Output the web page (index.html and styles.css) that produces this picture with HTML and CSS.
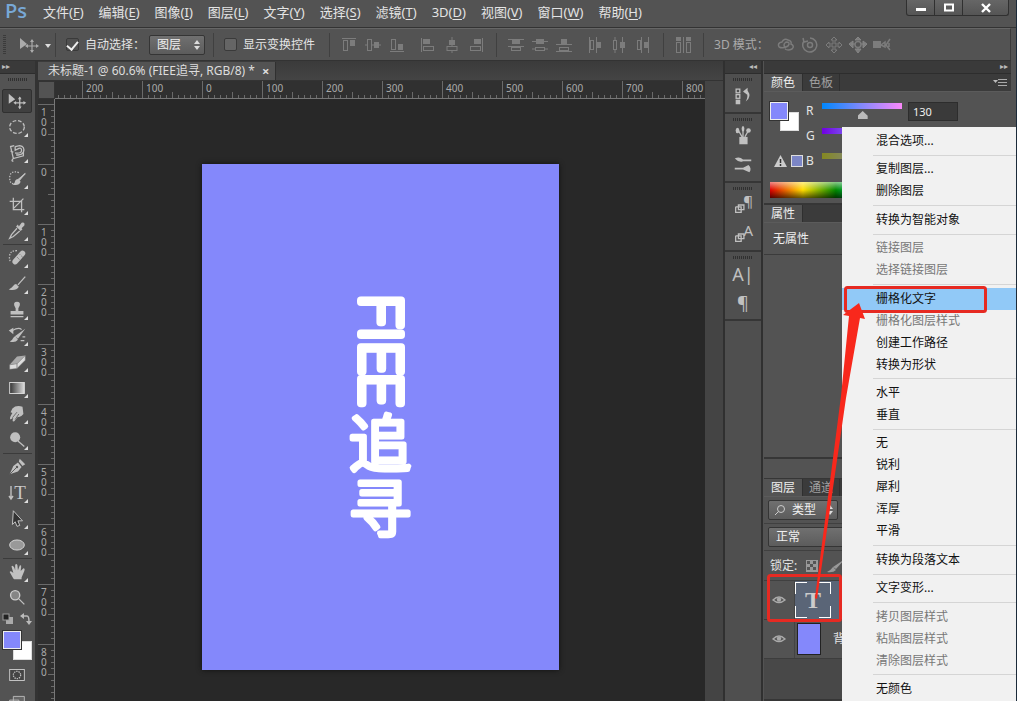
FILE: index.html
```html
<!DOCTYPE html>
<html lang="zh-CN">
<head>
<meta charset="utf-8">
<title>未标题-1</title>
<link rel="stylesheet" href="styles.css">
</head>
<body>
<svg class="defs" aria-hidden="true">
  <symbol id="eye" viewBox="0 0 14 10"><path d="M1 5Q7-1 13 5Q7 10 1 5Z" fill="none" stroke="currentColor" stroke-width="1.4"/><circle cx="7" cy="4.6" r="2.2" fill="currentColor"/></symbol>
  <symbol id="updown" viewBox="0 0 8 10"><path d="M4 0L7 4H1ZM4 10L7 6H1Z" fill="currentColor"/></symbol>
</svg>
<div class="app">
  <header class="titlebar">
    <span class="logo">Ps</span>
    <nav class="menubar">
      <button>文件(<u>F</u>)</button><button>编辑(<u>E</u>)</button><button>图像(<u>I</u>)</button><button>图层(<u>L</u>)</button><button>文字(<u>Y</u>)</button><button>选择(<u>S</u>)</button><button>滤镜(<u>T</u>)</button><button>3D(<u>D</u>)</button><button>视图(<u>V</u>)</button><button>窗口(<u>W</u>)</button><button>帮助(<u>H</u>)</button>
    </nav>
    <div class="winbtns">
      <button aria-label="最小化"><svg width="12" height="12"><path d="M1 7.500h10" stroke="#fff" stroke-width="3"/></svg></button>
      <button aria-label="最大化"><svg width="12" height="12"><rect x="2" y="2.500" width="8" height="6" fill="none" stroke="#fff" stroke-width="2"/></svg></button>
      <button class="close" aria-label="关闭"><svg width="12" height="12"><path d="M2 2L10 10M10 2L2 10" stroke="#fff" stroke-width="2.400"/></svg></button>
    </div>
  </header>

  <div class="options">
    <span class="vgrip"></span>
    <button class="preset" aria-label="移动工具"><svg width="36" height="18"><path d="M1 2V13L8 8Z" fill="#aaa"/><path d="M13 4V16M8 10H18" stroke="#aaa" stroke-width="1.200"/><path d="M13 3L11 6H15ZM13 17L11 14H15ZM6 10L9 8V12ZM20 10L17 8V12Z" fill="#aaa"/><path d="M26 8h6l-3 4Z" fill="#ddd"/></svg></button>
    <i class="bar"></i>
    <label class="opt"><input class="tick" type="checkbox" checked>自动选择：</label>
    <span class="pick target"><select aria-label="自动选择对象"><option>图层</option></select><svg class="pickmark" width="8" height="10"><use href="#updown"/></svg></span>
    <i class="bar gap"></i>
    <label class="opt"><input class="tick" type="checkbox">显示变换控件</label>
    <i class="bar widegap"></i>
    <div class="aligns">
      <button aria-label="顶对齐"><svg viewBox="0 0 16 16"><path d="M1 1.500H15" class="l"/><rect x="2.500" y="3.500" width="4" height="10" class="l"/><rect x="9" y="3" width="5" height="6"/></svg></button>
      <button aria-label="垂直居中对齐"><svg viewBox="0 0 16 16"><path d="M0 8H2M7 8H16" class="l"/><rect x="2.500" y="2.500" width="4" height="11" class="l"/><rect x="9" y="5" width="5" height="6"/></svg></button>
      <button aria-label="底对齐"><svg viewBox="0 0 16 16"><path d="M1 14.500H15" class="l"/><rect x="2.500" y="2.500" width="4" height="10" class="l"/><rect x="9" y="7" width="5" height="6"/></svg></button>
    </div>
    <div class="aligns">
      <button aria-label="左对齐"><svg viewBox="0 0 16 16"><path d="M1.500 1V15" class="l"/><rect x="3" y="2" width="7" height="5"/><rect x="3.500" y="9.500" width="10" height="4" class="l"/></svg></button>
      <button aria-label="水平居中对齐"><svg viewBox="0 0 16 16"><path d="M8 0V9M8 14V16" class="l"/><rect x="5" y="3" width="6" height="5"/><rect x="3" y="9.500" width="10" height="4" class="l"/></svg></button>
      <button aria-label="右对齐"><svg viewBox="0 0 16 16"><path d="M14.500 1V15" class="l"/><rect x="6" y="2" width="7" height="5"/><rect x="2.500" y="9.500" width="10" height="4" class="l"/></svg></button>
    </div>
    <i class="bar"></i>
    <div class="aligns">
      <button aria-label="按顶分布"><svg viewBox="0 0 16 16"><path d="M0 2.500H16M0 9.500H16" class="l"/><rect x="4" y="3" width="8" height="4"/><rect x="3.500" y="10.500" width="9" height="3" class="l"/></svg></button>
      <button aria-label="垂直居中分布"><svg viewBox="0 0 16 16"><path d="M0 4.500H16M0 12H3M13 12H16" class="l"/><rect x="4" y="2" width="8" height="5"/><rect x="3.500" y="10.500" width="9" height="3" class="l"/></svg></button>
      <button aria-label="按底分布"><svg viewBox="0 0 16 16"><path d="M0 7.500H16M0 14.500H16" class="l"/><rect x="5" y="2" width="6" height="5"/><rect x="3.500" y="10.500" width="9" height="3" class="l"/></svg></button>
    </div>
    <div class="aligns">
      <button aria-label="按左分布"><svg viewBox="0 0 16 16"><path d="M2.500 0V16M9.500 0V16" class="l"/><rect x="3.500" y="3.500" width="3" height="9" class="l"/><rect x="10" y="5" width="4" height="6"/></svg></button>
      <button aria-label="水平居中分布"><svg viewBox="0 0 16 16"><path d="M4 0V3M4 13V16M11.500 0V16" class="l"/><rect x="2.500" y="3.500" width="3" height="9" class="l"/><rect x="9" y="5" width="5" height="6"/></svg></button>
      <button aria-label="按右分布"><svg viewBox="0 0 16 16"><path d="M6.500 0V16M13.500 0V16" class="l"/><rect x="2.500" y="3.500" width="3" height="9" class="l"/><rect x="9" y="5" width="4" height="6"/></svg></button>
    </div>
    <i class="bar"></i>
    <div class="aligns"><button aria-label="自动对齐图层"><svg viewBox="0 0 16 16"><path d="M8.500 0V16" class="l"/><rect x="1" y="0" width="5" height="4"/><rect x="1.500" y="5.500" width="4" height="10" class="l"/><rect x="11" y="0" width="5" height="4"/><rect x="11.500" y="5.500" width="4" height="10" class="l"/></svg></button></div>
    <i class="bar"></i>
    <span class="mode">3D 模式：</span>
    <div class="aligns modes">
      <button aria-label="旋转"><svg viewBox="0 0 18 16"><path d="M2 10Q0 6 5 5Q7 1 11 3Q15 4 14 7Q18 9 15 12Q11 14 8 12M2 10Q6 12 11 9Q14 5 9 5Q5 8 9 11" class="l w"/></svg></button>
      <button aria-label="滚动"><svg viewBox="0 0 18 16"><circle cx="9" cy="8" r="2.500" class="l w"/><path d="M3 4A7 7 0 1 0 9 1M2 1L3 5L7 4" class="l w"/></svg></button>
      <button aria-label="拖动"><svg viewBox="0 0 18 16"><path d="M9 0L12 3H10V7H14V5L17 8L14 11V9H10V13H12L9 16L6 13H8V9H4V11L1 8L4 5V7H8V3H6Z" class="l"/></svg></button>
      <button aria-label="滑动"><svg viewBox="0 0 18 16"><path d="M9 0L12 3H6ZM0 7L4 4V11ZM18 7L14 4V11ZM9 16L6 12H12ZM2 7H6M12 7H16M9 10V13" stroke="#858585"/><circle cx="9" cy="7.500" r="3" class="l w"/></svg></button>
      <button aria-label="缩放"><svg viewBox="0 0 18 16"><rect x="0" y="4" width="8" height="7"/><path d="M8 8L12 5V10ZM17 2L13 8L17 13M16 6V10" class="l w"/></svg></button>
    </div>
  </div>

  <div class="work">
    <aside class="tools">
      <div class="strip">▸▸</div>
      <div class="grip"></div>
      <div class="toollist">
        <button class="tool on" aria-label="移动"><svg viewBox="0 0 24 24"><path d="M3 4V15L10 10Z"/><path d="M15 8V20M10 14H20" class="s"/><path d="M15 7L13 10H17ZM15 21L13 18H17ZM8 14L11 12V16ZM22 14L19 12V16Z"/></svg></button>
        <button class="tool more" aria-label="椭圆选框"><svg viewBox="0 0 24 24"><ellipse cx="12" cy="12" rx="8" ry="7" class="s" stroke-dasharray="4 2"/></svg></button>
        <button class="tool more" aria-label="磁性套索"><svg viewBox="0 0 24 24"><path d="M9 4L5 5L8 18L19 15V10M8 18Q5 21 8 21M5 10L8 11M10 5V9L14 7Q17 6 17 9Q17 13 10 12M10 5L15 4Q21 5 19 11Q17 15 11 14" class="s" stroke-width="1.900"/></svg></button>
        <button class="tool more" aria-label="快速选择"><svg viewBox="0 0 24 24"><path d="M14 5Q5 2 4 10Q4 18 9 17" class="s" stroke-dasharray="1.500 1.500"/><path d="M22 5L15 14L13 12ZM13 12L16 15Q14 20 7 18Q10 17 10 14Q11 12 13 12Z"/><path d="M21 6L14 13" class="s"/></svg></button>
        <button class="tool more" aria-label="裁剪"><svg viewBox="0 0 24 24"><path d="M8 4V17H20M4 8H17V20M8 16L19 5" class="s" stroke-width="2.200"/></svg></button>
        <button class="tool more" aria-label="吸管"><svg viewBox="0 0 24 24"><path d="M14 7L17 3Q21 2 20 6L17 9L18 10L16 12L11 7L13 5Z"/><path d="M12 9L6 16L4 20L8 18L15 12" class="s"/></svg></button>
        <hr>
        <button class="tool more" aria-label="修复画笔"><svg viewBox="0 0 24 24"><path d="M12 4Q4 4 4 10Q3 15 6 16" class="s" stroke-dasharray="1.500 1.500"/><path d="M18 7L10 16" stroke="#c0c0c0" stroke-width="6" stroke-linecap="round"/><path d="M12 11L16 15M15 8L19 12" stroke="#666" stroke-dasharray="1 1"/></svg></button>
        <button class="tool more" aria-label="画笔"><svg viewBox="0 0 24 24"><path d="M21 4L13 13" class="s" stroke-width="2"/><path d="M11 12L14 15Q11 20 3 18Q7 16 8 14Q9 12 11 12Z"/></svg></button>
        <button class="tool more" aria-label="仿制图章"><svg viewBox="0 0 24 24"><path d="M9 7Q8 3 12 3Q16 3 15 7L13.500 10V13H19V17H5V13H10.500V10ZM5 18.500H19V20H5Z"/></svg></button>
        <button class="tool more" aria-label="历史记录画笔"><svg viewBox="0 0 24 24"><path d="M21 4L13 15L10 12ZM10 12L13 16Q10 20 4 18Q7 17 8 14ZM3 6L8 3V10Z"/><path d="M7 6Q14 2 17 5M16 17H20M18 13H21" class="s"/></svg></button>
        <button class="tool more" aria-label="橡皮擦"><svg viewBox="0 0 24 24"><path d="M12 6L21 5L12 14L4 15Z" fill="#aaa"/><path d="M4 15L12 14V19L4 20ZM12 14L21 5V10L12 19Z" fill="#ddd" stroke="#777" stroke-width=".5"/></svg></button>
        <button class="tool more" aria-label="渐变"><svg viewBox="0 0 24 24"><defs><linearGradient id="grad"><stop stop-color="#333"/><stop offset="1" stop-color="#ddd"/></linearGradient></defs><rect x="4" y="6" width="16" height="12" fill="url(#grad)" stroke="#ddd"/></svg></button>
        <button class="tool more" aria-label="涂抹"><svg viewBox="0 0 24 24"><path d="M7 6Q11 2 18 4L19 12Q16 16 13 15L9 20Q6 21 8 16L5 18Q3 17 7 11L5 10Z"/><path d="M7 16L12 10M10 18L14 12" stroke="#666"/></svg></button>
        <button class="tool more" aria-label="减淡"><svg viewBox="0 0 24 24"><circle cx="10" cy="9" r="5.500"/><path d="M13 13L20 19" class="s" stroke-width="2.500"/></svg></button>
        <hr>
        <button class="tool more" aria-label="钢笔"><svg viewBox="0 0 24 24"><path d="M15 3L21 9L18 11L14 6ZM13 7L17 12L13 17L4 20L8 11Z"/><path d="M4 20L12 12" stroke="#555"/><circle cx="12" cy="12" r="1.300" fill="#555"/></svg></button>
        <button class="tool more type" aria-label="直排文字"><svg viewBox="0 0 6 16"><path d="M3 1V14M1 11L3 14L5 11" class="s"/></svg><b>T</b></button>
        <button class="tool more" aria-label="路径选择"><svg viewBox="0 0 24 24"><path d="M8 3L18 14L13 14L15 19L12 20L10 15L7 18Z" fill="#333" stroke="#ccc"/></svg></button>
        <button class="tool more" aria-label="椭圆"><svg viewBox="0 0 24 24"><ellipse cx="12" cy="12" rx="8" ry="5.500" fill="#999" stroke="#ddd"/></svg></button>
        <hr>
        <button class="tool more" aria-label="抓手"><svg viewBox="0 0 24 24"><path d="M8 19L4 12Q5 10 8 13L6 6Q7 4 9 7L10 10L10 4Q12 2 12.500 5L13 10L15 5Q17 4 16.500 7L16 11L19 8Q21 8 20 11L17 18V20H9Z"/></svg></button>
        <button class="tool" aria-label="缩放"><svg viewBox="0 0 24 24"><circle cx="10" cy="9" r="5" fill="#858585" stroke="#ccc" stroke-width="1.500"/><path d="M14 13L20 19" class="s" stroke-width="3"/></svg></button>
      </div>
      <div class="mini"><svg width="12" height="12"><rect x="4" y="4" width="7" height="7" fill="#aaa"/><rect x="1" y="1" width="6" height="6" fill="#222" stroke="#999"/></svg><svg width="12" height="12"><path d="M3 3H7Q9 3 9 9" fill="none" stroke="#bbb" stroke-width="1.500"/><path d="M4 0L0 3L4 6ZM6 8H12L9 12Z" fill="#bbb"/></svg></div>
      <div class="colors"><button class="fg" aria-label="前景色"></button><span class="bg"></span></div>
      <button class="tool mask" aria-label="快速蒙版"><svg viewBox="0 0 24 24"><rect x="4" y="6" width="16" height="12" fill="#444" stroke="#ccc"/><circle cx="12" cy="12" r="4" class="s" stroke-dasharray="1.500 1"/></svg></button>
      <button class="tool" aria-label="屏幕模式"><svg viewBox="0 0 24 24"><path d="M8 7H20V17H8ZM4 11H14V20H4Z" fill="#666" stroke="#bbb"/></svg></button>
    </aside>

    <main class="document">
      <div class="tabs"><div class="tab">未标题-1 @ 60.6% (FIEE追寻, RGB/8) *<button aria-label="关闭文档">×</button></div></div>
      <div class="view">
        <span class="corner"></span>
        <div class="hruler"><span></span><span>200</span><span>100</span><span>0</span><span>100</span><span>200</span><span>300</span><span>400</span><span>500</span><span>600</span><span>700</span><span>800</span></div>
        <div class="vruler"><span></span><span>100</span><span>0</span><span>100</span><span>200</span><span>300</span><span>400</span><span>500</span><span>600</span><span>700</span><span>800</span></div>
        <div class="canvas">
          <svg class="art" width="357" height="506" viewBox="0 0 357 506">
            <text class="latin" transform="translate(159 131) rotate(90)">FIEE</text>
            <text class="han" x="178" y="303">追</text>
            <text class="han" x="178" y="368">寻</text>
          </svg>
        </div>
      </div>
    </main>

    <aside class="dock">
      <div class="strip">◂◂</div>
      <div class="dockgroup"><div class="grip"></div><button aria-label="历史记录"><svg viewBox="0 0 24 24"><rect x="4.500" y="4.500" width="4" height="4" class="s"/><rect x="4.500" y="10.500" width="4" height="4" class="s"/><rect x="4" y="16" width="5" height="5"/><path d="M12 7L17 3V6Q22 13 15 18Q18 12 16 9L17 11Z"/></svg></button></div>
      <div class="dockgroup"><div class="grip"></div><button aria-label="画笔预设"><svg viewBox="0 0 24 24"><path d="M8 13H17V21H8Z"/><path d="M11 13L7 6M12 13V5M14 13L18 6" class="s" stroke-width="2"/><ellipse cx="6" cy="6" rx="2" ry="3"/><ellipse cx="12" cy="4" rx="1.500" ry="3"/><circle cx="18" cy="6" r="2.500"/></svg></button><button aria-label="画笔"><svg viewBox="0 0 24 24"><path d="M3 5Q8 2 12 6H21V8H12Q8 10 3 5ZM3 15H12L18 12Q22 16 19 20L12 17H3Z"/></svg></button></div>
      <div class="dockgroup"><div class="grip"></div><button aria-label="段落样式"><svg viewBox="0 0 24 24"><path d="M4 14V20H10V14H4M7 12V17H13V12Z" class="s"/></svg><span class="sup">¶</span></button><button aria-label="字符样式"><svg viewBox="0 0 24 24"><path d="M4 14V20H10V14H4M7 12V17H13V12Z" class="s"/></svg><span class="sup">A</span></button></div>
      <div class="dockgroup"><div class="grip"></div><button class="char" aria-label="字符">A|</button><button class="char" aria-label="段落">¶</button></div>
    </aside>

    <aside class="panels">
      <div class="strip right">▸▸</div>
      <section class="panel">
        <div class="ptabs"><button class="active">颜色</button><button>色板</button><button class="pmenu" aria-label="面板菜单"><svg width="14" height="9"><path d="M0 2H5L2.500 5Z" fill="#bbb"/><path d="M5 1.500H14M5 4.500H14M5 7.500H14" stroke="#aaa"/></svg></button></div>
        <div class="colorbody">
          <div class="swatchcol"><div class="colors small"><button class="fg" aria-label="前景色"></button><span class="bg"></span></div><div class="gamut"><svg width="13" height="12"><path d="M6.500 0L13 12H0Z" fill="#ccc"/><path d="M6.500 4V8M6.500 9V11" stroke="#333" stroke-width="1.500"/></svg><span></span></div></div>
          <div class="sliders">
            <label for="r">R</label><input type="range" id="r" class="r" max="255" value="130"><input type="text" aria-label="R 值" value="130">
            <label for="g">G</label><input type="range" id="g" class="g" max="255" value="135"><input type="text" aria-label="G 值" value="135">
            <label for="b">B</label><input type="range" id="b" class="b" max="255" value="255"><input type="text" aria-label="B 值" value="255">
          </div>
        </div>
        <div class="spectrum"></div>
      </section>
      <section class="panel props">
        <div class="ptabs"><button class="active">属性</button></div>
        <p>无属性</p>
      </section>
      <section class="panel layers">
        <div class="ptabs"><button class="active">图层</button><button>通道</button></div>
        <div class="lrow"><span class="pick wide"><svg width="12" height="12"><circle cx="7" cy="5" r="3.500" fill="none" stroke="#ccc"/><path d="M4.500 7.500L1 11" stroke="#ccc"/></svg><select aria-label="图层过滤"><option>类型</option></select><svg class="pickmark" width="8" height="10"><use href="#updown"/></svg></span></div>
        <div class="lrow"><span class="pick blend"><select aria-label="混合模式"><option>正常</option></select></span></div>
        <div class="lrow lock">锁定:<svg width="12" height="12"><rect width="12" height="12" fill="#999"/><path d="M1 1h3v3H1zM7 1h3v3H7zM4 4h3v3H4zM1 7h3v3H1zM7 7h3v3H7z" fill="#555"/></svg><svg width="18" height="14"><path d="M18 0L9 10L6 8ZM6 8L9 11Q6 14 0 13Q4 11 6 8Z" fill="#999"/></svg></div>
        <div class="layer sel"><button class="vis" aria-label="显示图层"><svg width="14" height="10"><use href="#eye"/></svg></button><div class="thumb text">T</div></div>
        <div class="layer"><button class="vis" aria-label="显示背景"><svg width="14" height="10"><use href="#eye"/></svg></button><div class="thumb fill"></div><em>背景</em></div>
      </section>
    </aside>
  </div>

  <div class="context" role="menu">
    <button>混合选项...</button><hr>
    <button>复制图层...</button><button>删除图层</button><hr>
    <button>转换为智能对象</button><hr>
    <button disabled>链接图层</button><button disabled>选择链接图层</button><hr>
    <button class="hot">栅格化文字</button><button disabled>栅格化图层样式</button><button>创建工作路径</button><button>转换为形状</button><hr>
    <button>水平</button><button>垂直</button><hr>
    <button>无</button><button>锐利</button><button>犀利</button><button>浑厚</button><button>平滑</button><hr>
    <button>转换为段落文本</button><hr>
    <button>文字变形...</button><hr>
    <button disabled>拷贝图层样式</button><button disabled>粘贴图层样式</button><button disabled>清除图层样式</button><hr>
    <button>无颜色</button>
  </div>
  <svg class="notes" width="250" height="350" viewBox="767 280 250 350" aria-hidden="true">
    <g fill="none" stroke="#e62a22" stroke-width="3"><rect x="846.500" y="287.500" width="140" height="24" rx="2"/><rect x="769.500" y="575.500" width="72" height="45" rx="2"/></g>
    <path d="M816 598L842 396L850 316L844 315L860 303L866 319L861 318L847 398L818 599Z" fill="#f8281c"/>
  </svg>
</div>
</body>
</html>
```

FILE: styles.css
```css
* { box-sizing: border-box; }
html, body { height: 100%; }
body {
  margin: 0;
  overflow: hidden;
  background: #1c2b3a;
  color: #e4e4e4;
  font: 12px/16px "Noto Sans", "Noto Sans CJK SC", sans-serif;
}
button, input, select { font: inherit; color: inherit; margin: 0; padding: 0; border: 0; background: none; }
svg { display: block; flex: none; }
hr { margin: 0; border: 0; }
.defs { position: absolute; width: 0; height: 0; }
.app { position: relative; display: flex; flex-direction: column; height: 100%; margin-right: 1px; background: #535353; overflow: hidden; }

.titlebar { display: flex; height: 28px; flex: none; border-bottom: 1px solid #333; }
.logo { width: 36px; padding-left: 5px; color: #78a8d6; font: 600 20px/22px "Open Sans", sans-serif; }
.menubar { display: flex; gap: 15px; padding-left: 7px; font-size: 13px; line-height: 24px; align-items: flex-start; flex: 1; white-space: nowrap; }
.menubar button { flex: none; }
.menubar u { text-underline-offset: 2px; }
.winbtns { display: flex; height: 16px; margin-right: 7px; border: 1px solid #303030; border-top: 0; border-radius: 0 0 3px 3px; background: linear-gradient(#666, #555); }
.winbtns button { width: 28px; display: grid; place-items: center; border-right: 1px solid #303030; }
.winbtns .close { width: 45px; border: 0; }

.options { display: flex; align-items: center; height: 33px; flex: none; margin-right: 5px; border-top: 1px solid #666; border-right: 1px solid #3a3a3a; border-bottom: 1px solid #333; white-space: nowrap; }
.vgrip { width: 3px; height: 20px; margin: 0 13px 0 3px; background: repeating-linear-gradient(#3b3b3b 0 1px, transparent 1px 2px); }
.bar { width: 1px; height: 24px; background: #404040; }
.bar.gap { margin-left: 8px; }
.bar.widegap { margin-left: 14px; }
.opt { display: flex; align-items: center; gap: 6px; margin-left: 10px; }
.tick { appearance: none; width: 13px; height: 13px; border: 1px solid #3a3a3a; border-radius: 2px; background: #656565; }
.tick:checked { background: #505050; display: grid; place-items: center; }
.tick:checked::after { content: ""; width: 5px; height: 9px; border: solid #eee; border-width: 0 2px 2px 0; transform: rotate(40deg); }
.pick { position: relative; display: flex; align-items: center; width: 56px; height: 20px; border: 1px solid #353535; border-radius: 2px; background: linear-gradient(#707070, #5c5c5c); }
.pick.target { margin-left: 4px; }
.pick select { appearance: none; flex: 1; min-width: 0; padding-left: 7px; color: #f0f0f0; }
.pickmark { position: absolute; right: 3px; color: #ddd; }
.aligns { display: flex; gap: 8px; margin-left: 12px; }
.aligns + .aligns { margin-left: 15px; }
.aligns svg { width: 16px; height: 16px; fill: #7c7c7c; }
.aligns .l { fill: none; stroke: #7c7c7c; }
.aligns .w { stroke-width: 1.5; }
.bar + .aligns { margin-left: 11px; }
.aligns:has(+ .bar) { margin-right: 12px; }
.mode { margin-left: 10px; color: #aaa; }
.aligns.modes { margin-left: 8px; gap: 6px; }
.modes svg { width: 18px; }

.work { display: flex; flex: 1; min-height: 0; margin-right: 5px; }
.strip { height: 13px; flex: none; padding-left: 2px; background: #3a3a3a; color: #bbb; font: 8px/12px "DejaVu Sans", sans-serif; border-bottom: 1px solid #2d2d2d; }
.strip.right { text-align: right; padding-right: 3px; }
.grip { height: 3px; width: 20px; margin: 4px auto 0; flex: none; background: repeating-linear-gradient(90deg, #303030 0 1px, transparent 1px 2px); }

.tools { width: 35px; flex: none; overflow: hidden; display: flex; flex-direction: column; background: #535353; }
.toollist { display: flex; flex-direction: column; margin-top: 7px; }
.toollist hr { height: 1px; margin: 0 3px; background: #3b3b3b; }
.tool { position: relative; width: 34px; height: 26px; display: grid; place-items: center; flex: none; color: #c9c9c9; }
.tool svg { width: 22px; height: 22px; fill: #c0c0c0; }
.s { fill: none; stroke: #c0c0c0; stroke-width: 1.4; }
.tool.on::before { content: ""; position: absolute; inset: 1px 2px; border: 1px solid #303030; border-radius: 2px; background: #404040; }
.tool.on svg { position: relative; }
.tool.more::after { content: ""; position: absolute; right: 6px; bottom: 3px; border: 2px solid; border-color: transparent #ddd #ddd transparent; }
.tool.type { display: flex; justify-content: center; align-items: center; }
.type b { font: 19px/24px "Liberation Serif", serif; }
.tool.type svg { width: 6px; height: 16px; }
.mini { display: flex; gap: 6px; padding: 2px 0 0 2px; height: 17px; flex: none; }
.colors { position: relative; width: 29px; height: 29px; margin: 3px 0 0 3px; flex: none; }
.fg { position: absolute; z-index: 1; top: 0; left: 0; width: 18px; height: 18px; border: 1px solid #eee; background: #8488fb; outline: 1px solid #333; }
.bg { position: absolute; right: 0; bottom: 0; width: 19px; height: 19px; background: #fff; border: 1px solid #ddd; }
.mask { margin-top: 2px; }

.document { flex: 1; min-width: 0; display: flex; flex-direction: column; border-left: 3px solid #333; background: #444; }
.tabs { display: flex; height: 20px; flex: none; padding-top: 1px; background: linear-gradient(#3b3b3b, #444); border-bottom: 1px solid #333; }
.tab { display: flex; align-items: center; gap: 7px; padding: 0 6px 0 10px; background: #535353; border-right: 1px solid #303030; white-space: nowrap; color: #ddd; }
.tab button { font: bold 13px/13px "Noto Sans", sans-serif; }
.view { flex: 1; min-height: 0; display: grid; grid-template: 18px 1fr / 17px 1fr; margin-right: 18px; }
.corner { background: #535353; border: 1px solid #333; }
.hruler, .vruler { overflow: hidden; color: #aaa; background-color: #303030; font: 10px/12px "Noto Sans", sans-serif; display: flex; }
.hruler {
  border-bottom: 1px solid #777;
  background-image: repeating-linear-gradient(90deg, #6a6a6a 0 1px, transparent 1px 60px), repeating-linear-gradient(90deg, #6a6a6a 0 1px, transparent 1px 30px), repeating-linear-gradient(90deg, #6a6a6a 0 1px, transparent 1px 6px);
  background-size: 1200px 100%, 1200px 6px, 1200px 3px;
  background-position: -33px 0, -33px 100%, -33px 100%;
  background-repeat: no-repeat;
}
.hruler span { width: 60px; flex: none; padding: 1px 0 0 4px; }
.hruler span:first-child { width: 27px; padding: 0; }
.vruler {
  flex-direction: column;
  border-right: 1px solid #777;
  background-image: repeating-linear-gradient(#6a6a6a 0 1px, transparent 1px 60px), repeating-linear-gradient(#6a6a6a 0 1px, transparent 1px 30px), repeating-linear-gradient(#6a6a6a 0 1px, transparent 1px 6px);
  background-size: 100% 1200px, 6px 1200px, 3px 1200px;
  background-position: 0 -55px, 100% -55px, 100% -55px;
  background-repeat: no-repeat;
}
.vruler span { height: 60px; flex: none; width: 7px; margin-left: 3px; padding-top: 3px; line-height: 10px; word-break: break-all; }
.vruler span:first-child { height: 5px; padding: 0; }
.canvas { display: flex; justify-content: center; align-items: flex-start; padding-top: 65px; background: #282828; overflow: hidden; }
.art { background: #8488fb; box-shadow: 0 0 5px #111; fill: #fff; stroke: #fff; stroke-linejoin: round; }
.latin { font: 100 56px Roboto, sans-serif; stroke-width: 8px; }
.han { font: 300 62px "Noto Sans CJK SC", sans-serif; stroke-width: 5px; text-anchor: middle; }

.dock { width: 40px; flex: none; background: #4f4f4f; border-left: 2px solid #303030; border-right: 2px solid #303030; margin-right: 1px; }
.dock .strip { text-align: right; padding-right: 4px; }
.dockgroup { display: flex; flex-direction: column; align-items: center; border-bottom: 2px solid #363636; padding-bottom: 2px; }
.dockgroup button { position: relative; width: 30px; height: 29px; display: grid; place-items: center; color: #c0c0c0; }
.dockgroup svg { width: 22px; height: 22px; fill: #c0c0c0; }
.sup { position: absolute; right: 5px; top: 2px; font: 15px/18px "Noto Sans", sans-serif; }
.dockgroup .char { font: 18px/20px "Noto Sans", sans-serif; }

.panels { width: 247px; flex: none; display: flex; flex-direction: column; background: #535353; }
.ptabs { display: flex; height: 18px; background: #3b3b3b; border-bottom: 1px solid #5b5b5b; }
.ptabs button { padding: 0 6px; color: #a0a0a0; border-right: 1px solid #2f2f2f; line-height: 16px; }
.ptabs .active { padding: 0 7px; background: #535353; color: #eee; }
.ptabs .pmenu { margin-left: auto; border: 0; padding: 0 4px; }
.colorbody { display: flex; padding: 10px 0 0 6px; height: 90px; }
.swatchcol { width: 36px; }
.colors.small { margin: 0; }
.gamut { display: flex; gap: 4px; padding-top: 24px; }
.gamut svg { margin-left: 4px; }
.gamut span { width: 12px; height: 12px; background: #7c86c6; border: 1px solid #ddd; }
.sliders { display: grid; grid-template: repeat(3, 18px) / 10px 80px 50px; row-gap: 7px; column-gap: 6px; align-items: center; }
.sliders input[type=text] { height: 19px; padding-left: 4px; background: #3a3a3a; border: 1px solid #2d2d2d; color: #eee; font-size: 11px; }
.sliders input[type=range] { appearance: none; width: 80px; height: 16px; background: linear-gradient(90deg, #0087fb, #8488fb, #fb88fb) 0 0 / 100% 6px no-repeat; }
.sliders input[type=range].g { background-image: linear-gradient(90deg, #7000e0, #8488fb, #84fffb); }
.sliders input[type=range].b { background-image: linear-gradient(90deg, #848820, #8488fb); }
.sliders input[type=range]::-webkit-slider-thumb { appearance: none; width: 10px; height: 8px; margin-top: 8px; background: #bbb; clip-path: polygon(50% 0, 100% 60%, 100% 100%, 0 100%, 0 60%); }
.spectrum { height: 16px; margin: 0 6px; background: linear-gradient(#fff8, transparent 50%, #0009), linear-gradient(90deg, #d00, #fd0 14%, #080 28%, #0dd 45%, #00d 65%, #d0d 85%, #d00); }
.panel { border-bottom: 2px solid #363636; }
.panel:first-of-type { padding-bottom: 5px; }
.props { flex: none; height: 254px; }
.props p { height: 32px; margin: 0; padding: 8px 9px; border-bottom: 1px solid #3b3b3b; color: #eee; }
.layers { flex: 1; margin-top: 19px; border-top: 1px solid #363636; background: #484848; }
.lrow { display: flex; align-items: center; height: 27px; padding-left: 4px; background: #535353; border-bottom: 1px solid #404040; }
.wide { width: 70px; gap: 6px; padding-left: 5px; }
.pick.wide select { padding: 0; }
.blend { width: 150px; }
.lock { height: 30px; gap: 9px; padding-left: 6px; }
.layer { display: flex; align-items: center; height: 39px; background: #535353; border-bottom: 1px solid #3d3d3d; }
.vis { width: 31px; height: 100%; display: grid; place-items: center; background: #535353; border-right: 1px solid #444; color: #aaa; }
.layer.sel { background: #5a6577; }
.thumb.text {
  width: 36px; height: 36px; text-align: center; color: #ccc; font: bold 24px/36px "Liberation Serif", serif;
  background: linear-gradient(90deg, #fff 12px, transparent 12px 24px, #fff 24px) 0 0 / 100% 1px, linear-gradient(90deg, #fff 12px, transparent 12px 24px, #fff 24px) 0 100% / 100% 1px, linear-gradient(#fff 12px, transparent 12px 24px, #fff 24px) 0 0 / 1px 100%, linear-gradient(#fff 12px, transparent 12px 24px, #fff 24px) 100% 0 / 1px 100%;
  background-repeat: no-repeat;
}
.thumb.fill { width: 24px; height: 32px; margin-left: 2px; background: #8488fb; border: 1px solid #222; }
.layer em { margin-left: 12px; font-style: normal; }

.context { position: absolute; top: 127px; right: 0; bottom: 0; width: 174px; padding: 3px 0 1px; display: flex; flex-direction: column; background: #f1f1f1; color: #111; }
.context button { flex: none; height: 22px; padding-left: 34px; text-align: left; line-height: 22px; }
.context button:disabled { color: #777; }
.context .hot { background: #91c9f7; }
.context hr { flex: 1; min-height: 5px; margin-left: 31px; background: linear-gradient(#d5d5d5, #d5d5d5) center / 100% 1px no-repeat; }
.notes { position: absolute; top: 280px; right: 0; }
```
